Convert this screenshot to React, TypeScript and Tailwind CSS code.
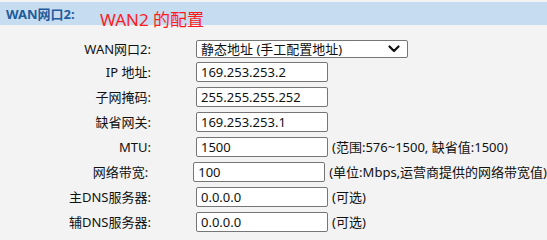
import { ChangeEvent, useState } from 'react';

const FONT = "font-['Noto_Sans','Noto_Sans_CJK_SC',sans-serif]";

const FIELDS = [
  { label: 'IP 地址:', value: '169.253.253.2', hint: '' },
  { label: '子网掩码:', value: '255.255.255.252', hint: '' },
  { label: '缺省网关:', value: '169.253.253.1', hint: '' },
  { label: 'MTU:', value: '1500', hint: '(范围:576~1500, 缺省值:1500)' },
  { label: '网络带宽:', value: '100', hint: '(单位:Mbps,运营商提供的网络带宽值)' },
  { label: '主DNS服务器:', value: '0.0.0.0', hint: '(可选)' },
  { label: '辅DNS服务器:', value: '0.0.0.0', hint: '(可选)' },
];

function Chevron() {
  return (
    <svg width="12" height="8" viewBox="0 0 12 8" className="pointer-events-none absolute right-[8px] top-[5px]">
      <path d="M1.5 1.5 L6 6 L10.5 1.5" fill="none" stroke="#111" strokeWidth="2.2" strokeLinecap="round" strokeLinejoin="round" />
    </svg>
  );
}

export default function App() {
  const [values, setValues] = useState(FIELDS.map((f) => f.value));
  const [mode, setMode] = useState('static');

  const onChange = (i: number) => (e: ChangeEvent<HTMLInputElement>) => {
    const next = [...values];
    next[i] = e.target.value;
    setValues(next);
  };

  return (
    <div className={`relative w-[547px] h-[240px] bg-[#f3f3f3] pt-[2px] text-[13px] text-[#111] ${FONT}`}>
      {/* Section header */}
      <div className="h-[23px] bg-[#c6dcf0] pl-[6px] flex items-center">
        <span className="font-bold text-[13px] leading-[16px] text-[#1e5c9c]">WAN网口2:</span>
      </div>

      {/* Annotation over the header */}
      <span className="absolute left-[100px] top-[9px] text-[17px] leading-[22px] text-[#ff1c1c]">WAN2 的配置</span>

      <div className="mt-[13px]">
        {/* Interface mode row */}
        <div className="flex h-[22px] items-center">
          <div className="w-[151px] leading-[18px] text-right">WAN网口2:</div>
          <div className="relative ml-[45px] w-[212px] h-[18px]">
            <select
              value={mode}
              onChange={(e) => setMode(e.target.value)}
              className="appearance-none w-full h-full bg-white border border-[#767676] rounded-[2px] pl-[4px] text-[13px] leading-[16px] text-[#111] outline-none"
            >
              <option value="static">静态地址 (手工配置地址)</option>
              <option value="dhcp">动态地址 (DHCP)</option>
              <option value="pppoe">PPPoE</option>
            </select>
            <Chevron />
          </div>
        </div>

        {/* Address rows */}
        {FIELDS.map((f, i) => (
          <div key={f.label} className="flex h-[25px] items-start pt-[2px]">
            <div className="w-[151px] h-[20px] leading-[20px] text-right">{f.label}</div>
            <input
              value={values[i]}
              onChange={onChange(i)}
              className="ml-[45px] w-[132px] h-[20px] bg-white border border-[#767676] rounded-[2px] px-[4px] text-[13px] leading-[18px] text-[#111] outline-none"
            />
            {f.hint && <span className="ml-[4px] h-[20px] leading-[20px] whitespace-nowrap">{f.hint}</span>}
          </div>
        ))}
      </div>
    </div>
  );
}
